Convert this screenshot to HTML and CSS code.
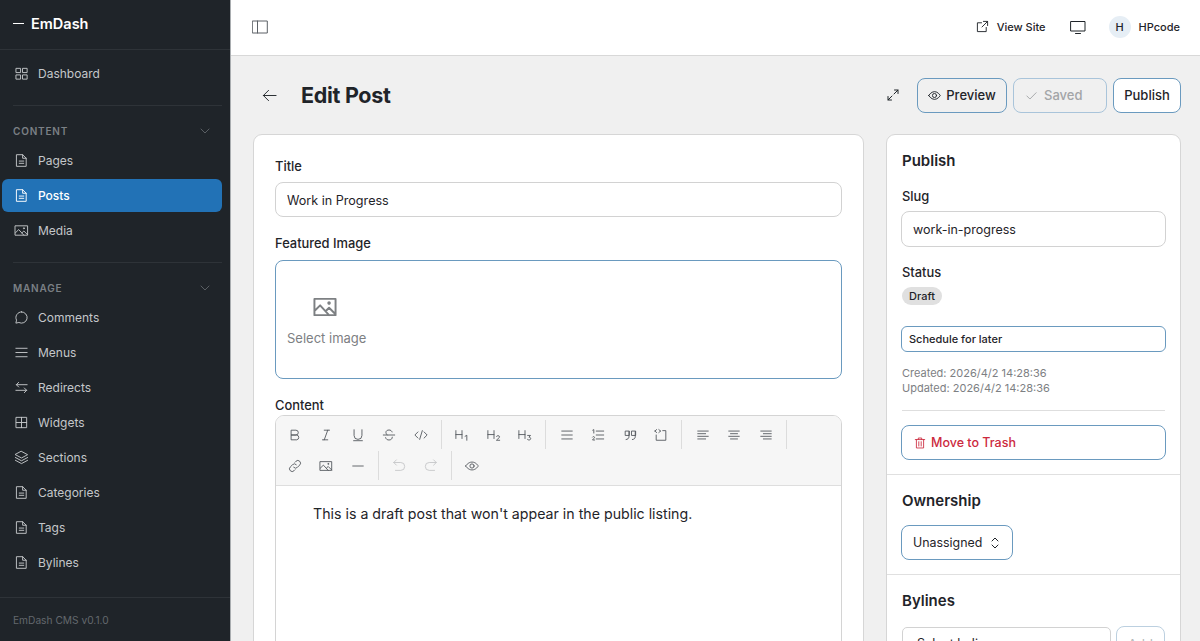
FILE: index.html
```html
<!DOCTYPE html>
<html lang="en">
<head>
    <meta charset="UTF-8">
    <meta name="viewport" content="width=device-width, initial-scale=1.0">
    <title>Edit Post - EmDash</title>
    <link rel="stylesheet" href="styles.css">
</head>
<body>
    <svg class="sprite" width="0" height="0">
        <symbol id="i-doc" viewBox="0 0 16 16"><path d="M3 1.800h6.200L13 5.600v8.600H3zM9.200 1.800v3.800H13M5.600 8.600h4.800M5.600 11h4.800"/></symbol>
        <symbol id="i-image" viewBox="0 0 16 16"><path d="M1.500 3h13v10h-13zM1.500 10.500 5 7l5.500 6M8.500 10.500l2-2 4 4"/><circle cx="10.500" cy="5.600" r=".5"/></symbol>
    </svg>
    <div class="app">
        <aside class="sidebar">
            <div class="brand"><span class="brand-dash"></span>EmDash</div>
            <nav class="nav">
                <a class="nav-item first">
                    <svg class="icon" viewBox="0 0 16 16"><path d="M2.500 2.500h4.500v4.500h-4.500zM9.500 2.500h4.500v4.500h-4.500zM2.500 9.500h4.500v4.500h-4.500zM9.500 9.500h4.500v4.500h-4.500z"/></svg>
                    Dashboard
                </a>
                <div class="nav-rule"></div>
                <div class="nav-group">CONTENT
                    <svg class="chev" viewBox="0 0 12 12"><path d="m2 4 4 4 4-4"/></svg>
                </div>
                <a class="nav-item"><svg class="icon"><use href="#i-doc"/></svg>Pages</a>
                <a class="nav-item active"><svg class="icon"><use href="#i-doc"/></svg>Posts</a>
                <a class="nav-item"><svg class="icon"><use href="#i-image"/></svg>Media</a>
                <div class="nav-rule"></div>
                <div class="nav-group">MANAGE
                    <svg class="chev" viewBox="0 0 12 12"><path d="m2 4 4 4 4-4"/></svg>
                </div>
                <a class="nav-item">
                    <svg class="icon" viewBox="0 0 16 16"><path d="M8 2a6 6 0 1 1-2.800 11.300L2 14l.7-3.200A6 6 0 0 1 8 2z"/></svg>
                    Comments
                </a>
                <a class="nav-item">
                    <svg class="icon" viewBox="0 0 16 16"><path d="M2 3.500h12M2 8h12M2 12.500h12"/></svg>
                    Menus
                </a>
                <a class="nav-item">
                    <svg class="icon" viewBox="0 0 16 16"><path d="M14 5H2.500M5 2.500 2.500 5 5 7.500M2 11h11.500M11 8.500l2.500 2.500-2.500 2.500"/></svg>
                    Redirects
                </a>
                <a class="nav-item">
                    <svg class="icon" viewBox="0 0 16 16"><path d="M2.500 2.500h11v11h-11zM8 2.500v11M2.500 8h11"/></svg>
                    Widgets
                </a>
                <a class="nav-item">
                    <svg class="icon" viewBox="0 0 16 16"><path d="M8 1.500 14.500 5 8 8.500 1.500 5zM1.500 8 8 11.500 14.500 8M1.500 11 8 14.500 14.500 11"/></svg>
                    Sections
                </a>
                <a class="nav-item"><svg class="icon"><use href="#i-doc"/></svg>Categories</a>
                <a class="nav-item"><svg class="icon"><use href="#i-doc"/></svg>Tags</a>
                <a class="nav-item"><svg class="icon"><use href="#i-doc"/></svg>Bylines</a>
            </nav>
            <div class="side-foot">EmDash CMS v0.1.0</div>
        </aside>

        <div class="main">
            <header class="topbar">
                <svg class="top-toggle" viewBox="0 0 16 16"><path d="M.7 2h14.600v12H.7zM5.500 2v12"/></svg>
                <div class="top-right">
                    <a class="view-site">
                        <svg class="icon-sm" viewBox="0 0 14 14"><path d="M6 3H1.500v9.500H11V8M8 1.500h4.500V6M12.500 1.500 6.500 7.500"/></svg>
                        View Site
                    </a>
                    <svg class="monitor" viewBox="0 0 16 16"><path d="M1 2.500h14v9.500H1zM5.500 14.500h5"/></svg>
                    <div class="user"><span class="avatar">H</span>HPcode</div>
                </div>
            </header>

            <div class="content">
                <div class="page-head">
                    <svg class="back" viewBox="0 0 16 16"><path d="M15 8H1.500M7 2.500 1.500 8 7 13.500"/></svg>
                    <h1>Edit Post</h1>
                    <svg class="expand" viewBox="0 0 12 12"><path d="M7 5l4-4M7.500 1H11v3.500M5 7l-4 4M1 7.500V11h3.500"/></svg>
                    <button class="btn btn-preview">
                        <svg class="icon-sm" viewBox="0 0 14 14"><path d="M.8 7S3.200 2.800 7 2.800 13.200 7 13.200 7 10.800 11.200 7 11.200.8 7 .8 7z"/><circle cx="7" cy="7" r="2.200"/></svg>
                        Preview
                    </button>
                    <button class="btn btn-saved">
                        <svg class="icon-sm" viewBox="0 0 14 14"><path d="m2 7.500 3.300 3.300L12 4"/></svg>
                        Saved
                    </button>
                    <button class="btn btn-publish">Publish</button>
                </div>

                <div class="columns">
                    <section class="card editor-card">
                        <label class="label">Title</label>
                        <div class="input">Work in Progress</div>
                        <label class="label label-image">Featured Image</label>
                        <div class="image-picker">
                            <svg class="picker-icon"><use href="#i-image"/></svg>
                            <span>Select image</span>
                        </div>
                        <label class="label label-content">Content</label>
                        <div class="editor">
                            <div class="toolbar">
                                <div class="tool-row">
                                    <span class="tool"><svg viewBox="0 0 16 16"><path d="M4 2.500h5a2.700 2.700 0 0 1 0 5.500H4zM4 8h6a2.800 2.800 0 0 1 0 5.500H4z"/></svg></span>
                                    <span class="tool"><svg viewBox="0 0 16 16"><path d="M6 2.500h6M4 13.500h6M10 2.500l-4 11"/></svg></span>
                                    <span class="tool"><svg viewBox="0 0 16 16"><path d="M3.500 2v6.500a4.500 4.500 0 0 0 9 0V2M3 14.500h10"/></svg></span>
                                    <span class="tool"><svg viewBox="0 0 16 16"><path d="M1.500 8h13M11.500 4.500C11 3 9.700 2.300 8 2.300c-2 0-3.500 1-3.500 2.700 0 1 .5 2 1.500 3M11.800 10.500c0 2-1.600 3.200-3.800 3.200-1.900 0-3.500-.9-3.900-2.700"/></svg></span>
                                    <span class="tool"><svg viewBox="0 0 16 16"><path d="M4.500 4.500 1 8l3.500 3.500M11.500 4.500 15 8l-3.500 3.500M9.500 3l-3 10"/></svg></span>
                                    <i class="tool-sep"></i>
                                    <span class="tool"><svg viewBox="0 0 16 16"><path d="M1 3v9M8 3v9M1 7.500h7M11.500 9.500l2-1.200V14"/></svg></span>
                                    <span class="tool"><svg viewBox="0 0 16 16"><path d="M1 3v9M8 3v9M1 7.500h7M10.800 9.500c.5-1 3.500-1.200 3.500.6 0 1.400-2.500 2.600-3.500 3.900h3.700"/></svg></span>
                                    <span class="tool"><svg viewBox="0 0 16 16"><path d="M1 3v9M8 3v9M1 7.500h7M11 8.500h3.300l-1.800 2c1.200 0 2 .6 2 1.600 0 1.800-2.800 2.200-3.700 1"/></svg></span>
                                    <i class="tool-sep"></i>
                                    <span class="tool"><svg viewBox="0 0 16 16"><path d="M2 3.500h12M2 8h12M2 12.500h12"/></svg></span>
                                    <span class="tool"><svg viewBox="0 0 16 16"><path d="M6 3.500h8.500M6 8h8.500M6 12.500h8.500M2 2.500l1.200-.7v4M1.800 10.300c.4-.8 2.200-.7 2.200.4 0 .9-1.500 1.500-2.200 3h2.400"/></svg></span>
                                    <span class="tool"><svg viewBox="0 0 16 16"><path d="M6.800 3.500H2.500v5h4.300zM6.800 4v6c0 2-1.500 3-3.300 3.200M14 3.500H9.700v5H14zM14 4v6c0 2-1.500 3-3.300 3.200"/></svg></span>
                                    <span class="tool"><svg viewBox="0 0 16 16"><path d="M10 3h3.500v11h-11V8M1 3.500 3 1.800M1 3.500 3 5.200M7.500 3.500 5.500 1.800M7.500 3.500 5.500 5.200"/></svg></span>
                                    <i class="tool-sep"></i>
                                    <span class="tool"><svg viewBox="0 0 16 16"><path d="M2 3.500h12M2 6.500h9M2 9.500h12M2 12.500h9"/></svg></span>
                                    <span class="tool"><svg viewBox="0 0 16 16"><path d="M2 3.500h12M4 6.500h8M2 9.500h12M4 12.500h8"/></svg></span>
                                    <span class="tool"><svg viewBox="0 0 16 16"><path d="M2 3.500h12M5 6.500h9M2 9.500h12M5 12.500h9"/></svg></span>
                                    <i class="tool-sep"></i>
                                </div>
                                <div class="tool-row">
                                    <span class="tool"><svg viewBox="0 0 16 16"><path d="M6.500 9.500a3 3 0 0 0 4.300 0l2.600-2.600a3 3 0 0 0-4.300-4.300L8 3.700M9.500 6.500a3 3 0 0 0-4.300 0L2.600 9.100a3 3 0 0 0 4.300 4.300L8 12.300"/></svg></span>
                                    <span class="tool"><svg><use href="#i-image"/></svg></span>
                                    <span class="tool"><svg viewBox="0 0 16 16"><path d="M2 8h12"/></svg></span>
                                    <i class="tool-sep"></i>
                                    <span class="tool muted"><svg viewBox="0 0 16 16"><path d="M5 7 2 4l3-3M2 4h8a4.500 4.500 0 0 1 0 9H4"/></svg></span>
                                    <span class="tool muted"><svg viewBox="0 0 16 16"><path d="m11 7 3-3-3-3M14 4H6a4.500 4.500 0 0 0 0 9h6"/></svg></span>
                                    <i class="tool-sep"></i>
                                    <span class="tool"><svg viewBox="0 0 16 16"><path d="M.8 8S3.300 3.500 8 3.500 15.200 8 15.200 8 12.700 12.500 8 12.500.8 8 .8 8z"/><circle cx="8" cy="8" r="2.400"/></svg></span>
                                </div>
                            </div>
                            <div class="editor-body">This is a draft post that won't appear in the public listing.</div>
                        </div>
                    </section>

                    <aside class="card side-card">
                        <div class="side-section publish-section">
                            <h2>Publish</h2>
                            <label class="label label-side">Slug</label>
                            <div class="input">work-in-progress</div>
                            <label class="label label-status">Status</label>
                            <span class="badge">Draft</span>
                            <div class="schedule">Schedule for later</div>
                            <div class="dates">
                                <div>Created: 2026/4/2 14:28:36</div>
                                <div>Updated: 2026/4/2 14:28:36</div>
                            </div>
                            <div class="side-rule"></div>
                            <button class="trash">
                                <svg class="icon-sm" viewBox="0 0 14 14"><path d="M1.500 3h11M5 3V1.200h4V3M2.800 3v9.800h8.400V3M5.600 5.500v5M8.400 5.500v5"/></svg>
                                Move to Trash
                            </button>
                        </div>
                        <div class="side-section">
                            <h2>Ownership</h2>
                            <div class="owner-select">Unassigned
                                <svg class="updown" viewBox="0 0 10 14"><path d="m2 5 3-3 3 3M2 9l3 3 3-3"/></svg>
                            </div>
                        </div>
                        <div class="side-section">
                            <h2>Bylines</h2>
                            <div class="byline-row">
                                <div class="byline-select">Select byline...</div>
                                <button class="add">Add</button>
                            </div>
                        </div>
                    </aside>
                </div>
            </div>
        </div>
    </div>
</body>
</html>
```

FILE: styles.css
```css
* {
    box-sizing: border-box;
}
html, body {
    margin: 0;
    height: 641px;
    overflow: hidden;
}
body {
    font-family: Inter, "Liberation Sans", sans-serif;
    font-size: 14px;
    color: #1f2429;
    background-color: #f0f0f0;
}
svg {
    fill: none;
    stroke: currentColor;
    stroke-width: 1;
    stroke-linecap: round;
    stroke-linejoin: round;
    flex-shrink: 0;
}
symbol {
    overflow: visible;
}
.sprite {
    position: absolute;
}
.app {
    display: flex;
    height: 641px;
}

/* sidebar */
.sidebar {
    width: 231px;
    flex-shrink: 0;
    display: flex;
    flex-direction: column;
    background-color: #1f2429;
    border-right: 1px solid #a9adb0;
    color: #c4c7ca;
}
.brand {
    height: 50px;
    flex-shrink: 0;
    display: flex;
    align-items: center;
    gap: 7px;
    padding: 0 0 3px 13px;
    border-bottom: 1px solid #2e3338;
    color: #fff;
    font-size: 14.500px;
    font-weight: 600;
}
.brand-dash {
    width: 11px;
    height: 1px;
    margin-top: 1px;
    background-color: #fff;
}
.nav {
    flex: 1;
    padding: 6px 8px 0 2px;
    overflow: hidden;
}
.nav-item {
    display: flex;
    align-items: center;
    gap: 9px;
    height: 35px;
    padding-left: 12px;
    font-size: 12px;
}
.nav-item.active {
    height: 33px;
    margin: 1px 0;
    border-radius: 6px;
    background-color: #2272b6;
    color: #fff;
    font-weight: 500;
}
.icon {
    width: 15px;
    height: 15px;
}
.nav-rule {
    height: 1px;
    margin: 14px 0 0 11px;
    background-color: #2e3338;
}
.nav-group {
    display: flex;
    align-items: center;
    justify-content: space-between;
    height: 20px;
    margin: 15px 0 2px;
    padding: 0 11px;
    color: #7b8085;
    font-size: 10px;
    font-weight: 600;
    letter-spacing: 0.8px;
}
.chev {
    width: 12px;
    height: 12px;
    color: #5a5f64;
}
.side-foot {
    height: 44px;
    flex-shrink: 0;
    padding: 16px 0 0 13px;
    border-top: 1px solid #2e3338;
    color: #63686d;
    font-size: 10.200px;
}

/* top bar */
.main {
    flex: 1;
    min-width: 0;
}
.topbar {
    height: 56px;
    display: flex;
    align-items: center;
    justify-content: space-between;
    padding: 0 20px 2px 21px;
    background-color: #fff;
    border-bottom: 1px solid #d8d8d8;
}
.top-toggle {
    width: 16px;
    height: 16px;
    color: #5c6166;
}
.top-right {
    display: flex;
    align-items: center;
}
.view-site {
    display: flex;
    align-items: center;
    gap: 8px;
    font-size: 11px;
    font-weight: 500;
}
.icon-sm {
    width: 13px;
    height: 13px;
}
.monitor {
    width: 16px;
    height: 16px;
    margin-left: 24px;
}
.user {
    display: flex;
    align-items: center;
    gap: 8px;
    margin-left: 23px;
    font-size: 11px;
    font-weight: 500;
}
.avatar {
    width: 22px;
    height: 22px;
    display: flex;
    align-items: center;
    justify-content: center;
    border-radius: 50%;
    background-color: #e6eef5;
}

/* page */
.content {
    padding: 22px 19px 0 22px;
}
.page-head {
    display: flex;
    align-items: center;
    height: 34px;
}
.back {
    width: 15px;
    height: 15px;
    margin-left: 9px;
}
h1 {
    flex: 1;
    margin: 0 0 0 24px;
    font-size: 21.500px;
    font-weight: 700;
    letter-spacing: -0.3px;
}
.expand {
    width: 12px;
    height: 12px;
    margin-right: 18px;
}
.btn {
    display: flex;
    align-items: center;
    justify-content: center;
    gap: 5px;
    height: 35px;
    margin-left: 6px;
    padding: 0;
    border: 1px solid #6a9abf;
    border-radius: 8px;
    font-family: inherit;
    font-size: 13px;
    font-weight: 500;
    color: #1f2429;
    background-color: #f0f0f0;
}
.btn-preview {
    width: 90px;
    margin-left: 0;
}
.btn-saved {
    width: 94px;
    justify-content: flex-start;
    gap: 6px;
    padding-left: 11px;
    border-color: #a9c4da;
    color: #a3a5a7;
}
.btn-publish {
    width: 68px;
    background-color: #fff;
}
.columns {
    display: flex;
    align-items: flex-start;
    gap: 22px;
    margin-top: 22px;
}
.card {
    background-color: #fff;
    border: 1px solid #d6d6d6;
    border-radius: 9px;
}
.editor-card {
    width: 611px;
    height: 700px;
    padding: 23px 21px;
}
.side-card {
    width: 295px;
}
.label {
    display: block;
    padding-top: 1px;
    font-size: 12.900px;
    font-weight: 500;
    line-height: 15px;
    margin-bottom: 8px;
}
.input {
    height: 35px;
    display: flex;
    align-items: center;
    padding: 1px 11px 0;
    border: 1px solid #d2d2d2;
    border-radius: 8px;
    font-size: 12.600px;
    background-color: #fff;
}
.side-section .input {
    height: 36px;
    margin: 0 -1px;
    padding-top: 0;
    font-size: 12.500px;
}
.label-image {
    margin: 18px 0 9px;
}
.image-picker {
    height: 119px;
    display: flex;
    flex-direction: column;
    justify-content: center;
    align-items: flex-start;
    padding: 0 11px;
    border: 1px solid #6a9abf;
    border-radius: 8px;
    color: #7d8083;
    font-size: 13px;
}
.picker-icon {
    width: 26px;
    height: 26px;
    margin: 0 0 10px 25px;
    stroke-width: 1.2;
}
.label-content {
    margin: 18px 0 2px;
}
.editor {
    border: 1px solid #d4d4d4;
    border-radius: 9px;
    overflow: hidden;
}
.toolbar {
    height: 70px;
    padding: 3px 3px 0;
    background-color: #f6f6f6;
    border-bottom: 1px solid #dedede;
}
.tool-row {
    display: flex;
    align-items: center;
    height: 31px;
}
.tool {
    width: 31.500px;
    height: 29px;
    display: flex;
    align-items: center;
    justify-content: center;
    color: #50555a;
}
.tool svg {
    width: 14px;
    height: 14px;
}
.tool.muted {
    color: #c3c5c7;
}
.tool-sep {
    width: 1px;
    height: 29px;
    margin: 0 5px 0 4px;
    background-color: #dcdcdc;
}
.editor-body {
    padding: 19px 37px;
    height: 300px;
    font-size: 14.200px;
    background-color: #fff;
}

/* side panel */
.side-section {
    padding: 16px 15px 14px;
    border-bottom: 1px solid #e0e0e0;
}
.side-section:last-child {
    border-bottom: 0;
}
h2 {
    margin: 0;
    font-size: 15px;
    font-weight: 600;
    line-height: 20px;
}
.label-side {
    margin: 17px 0 7px;
}
.label-status {
    margin: 17px 0 6px;
}
.badge {
    display: inline-block;
    height: 18px;
    padding: 0 7px;
    border-radius: 9px;
    background-color: #e0e0e0;
    font-size: 11px;
    font-weight: 500;
    line-height: 18px;
}
.schedule {
    height: 26px;
    display: flex;
    align-items: center;
    margin: 21px -1px 0;
    padding: 0 7px;
    border: 1px solid #6a9abf;
    border-radius: 6px;
    font-size: 11px;
    font-weight: 500;
}
.dates {
    margin-top: 14px;
    color: #7d8083;
    font-size: 11px;
    line-height: 15px;
}
.side-rule {
    height: 1px;
    margin-top: 14px;
    background-color: #dedede;
}
.trash {
    width: calc(100% + 2px);
    height: 35px;
    display: flex;
    align-items: center;
    gap: 5px;
    margin: 14px -1px 0;
    padding: 0 12px;
    border: 1px solid #6a9abf;
    border-radius: 8px;
    background-color: #fff;
    color: #cc2a3e;
    font-family: inherit;
    font-size: 12.500px;
    font-weight: 500;
}
.trash .icon-sm {
    width: 12px;
    height: 12px;
}
.owner-select {
    width: 112px;
    height: 35px;
    display: flex;
    align-items: center;
    justify-content: space-between;
    margin: 14px 0 0 -1px;
    padding: 0 12px 0 11px;
    border: 1px solid #6a9abf;
    border-radius: 8px;
    font-size: 12.400px;
}
.updown {
    width: 10px;
    height: 14px;
}
.byline-row {
    display: flex;
    justify-content: space-between;
    margin-top: 15px;
}
.byline-select {
    width: 209px;
    height: 35px;
    margin-top: 1px;
    padding: 8px 14px;
    border: 1px solid #d2d2d2;
    border-radius: 5px;
    font-size: 12.500px;
}
.add {
    width: 49px;
    height: 35px;
    border: 1px solid #bcd0e0;
    border-radius: 8px;
    background-color: #fff;
    color: #b5b7b9;
    font-family: inherit;
    font-size: 13px;
}
```
